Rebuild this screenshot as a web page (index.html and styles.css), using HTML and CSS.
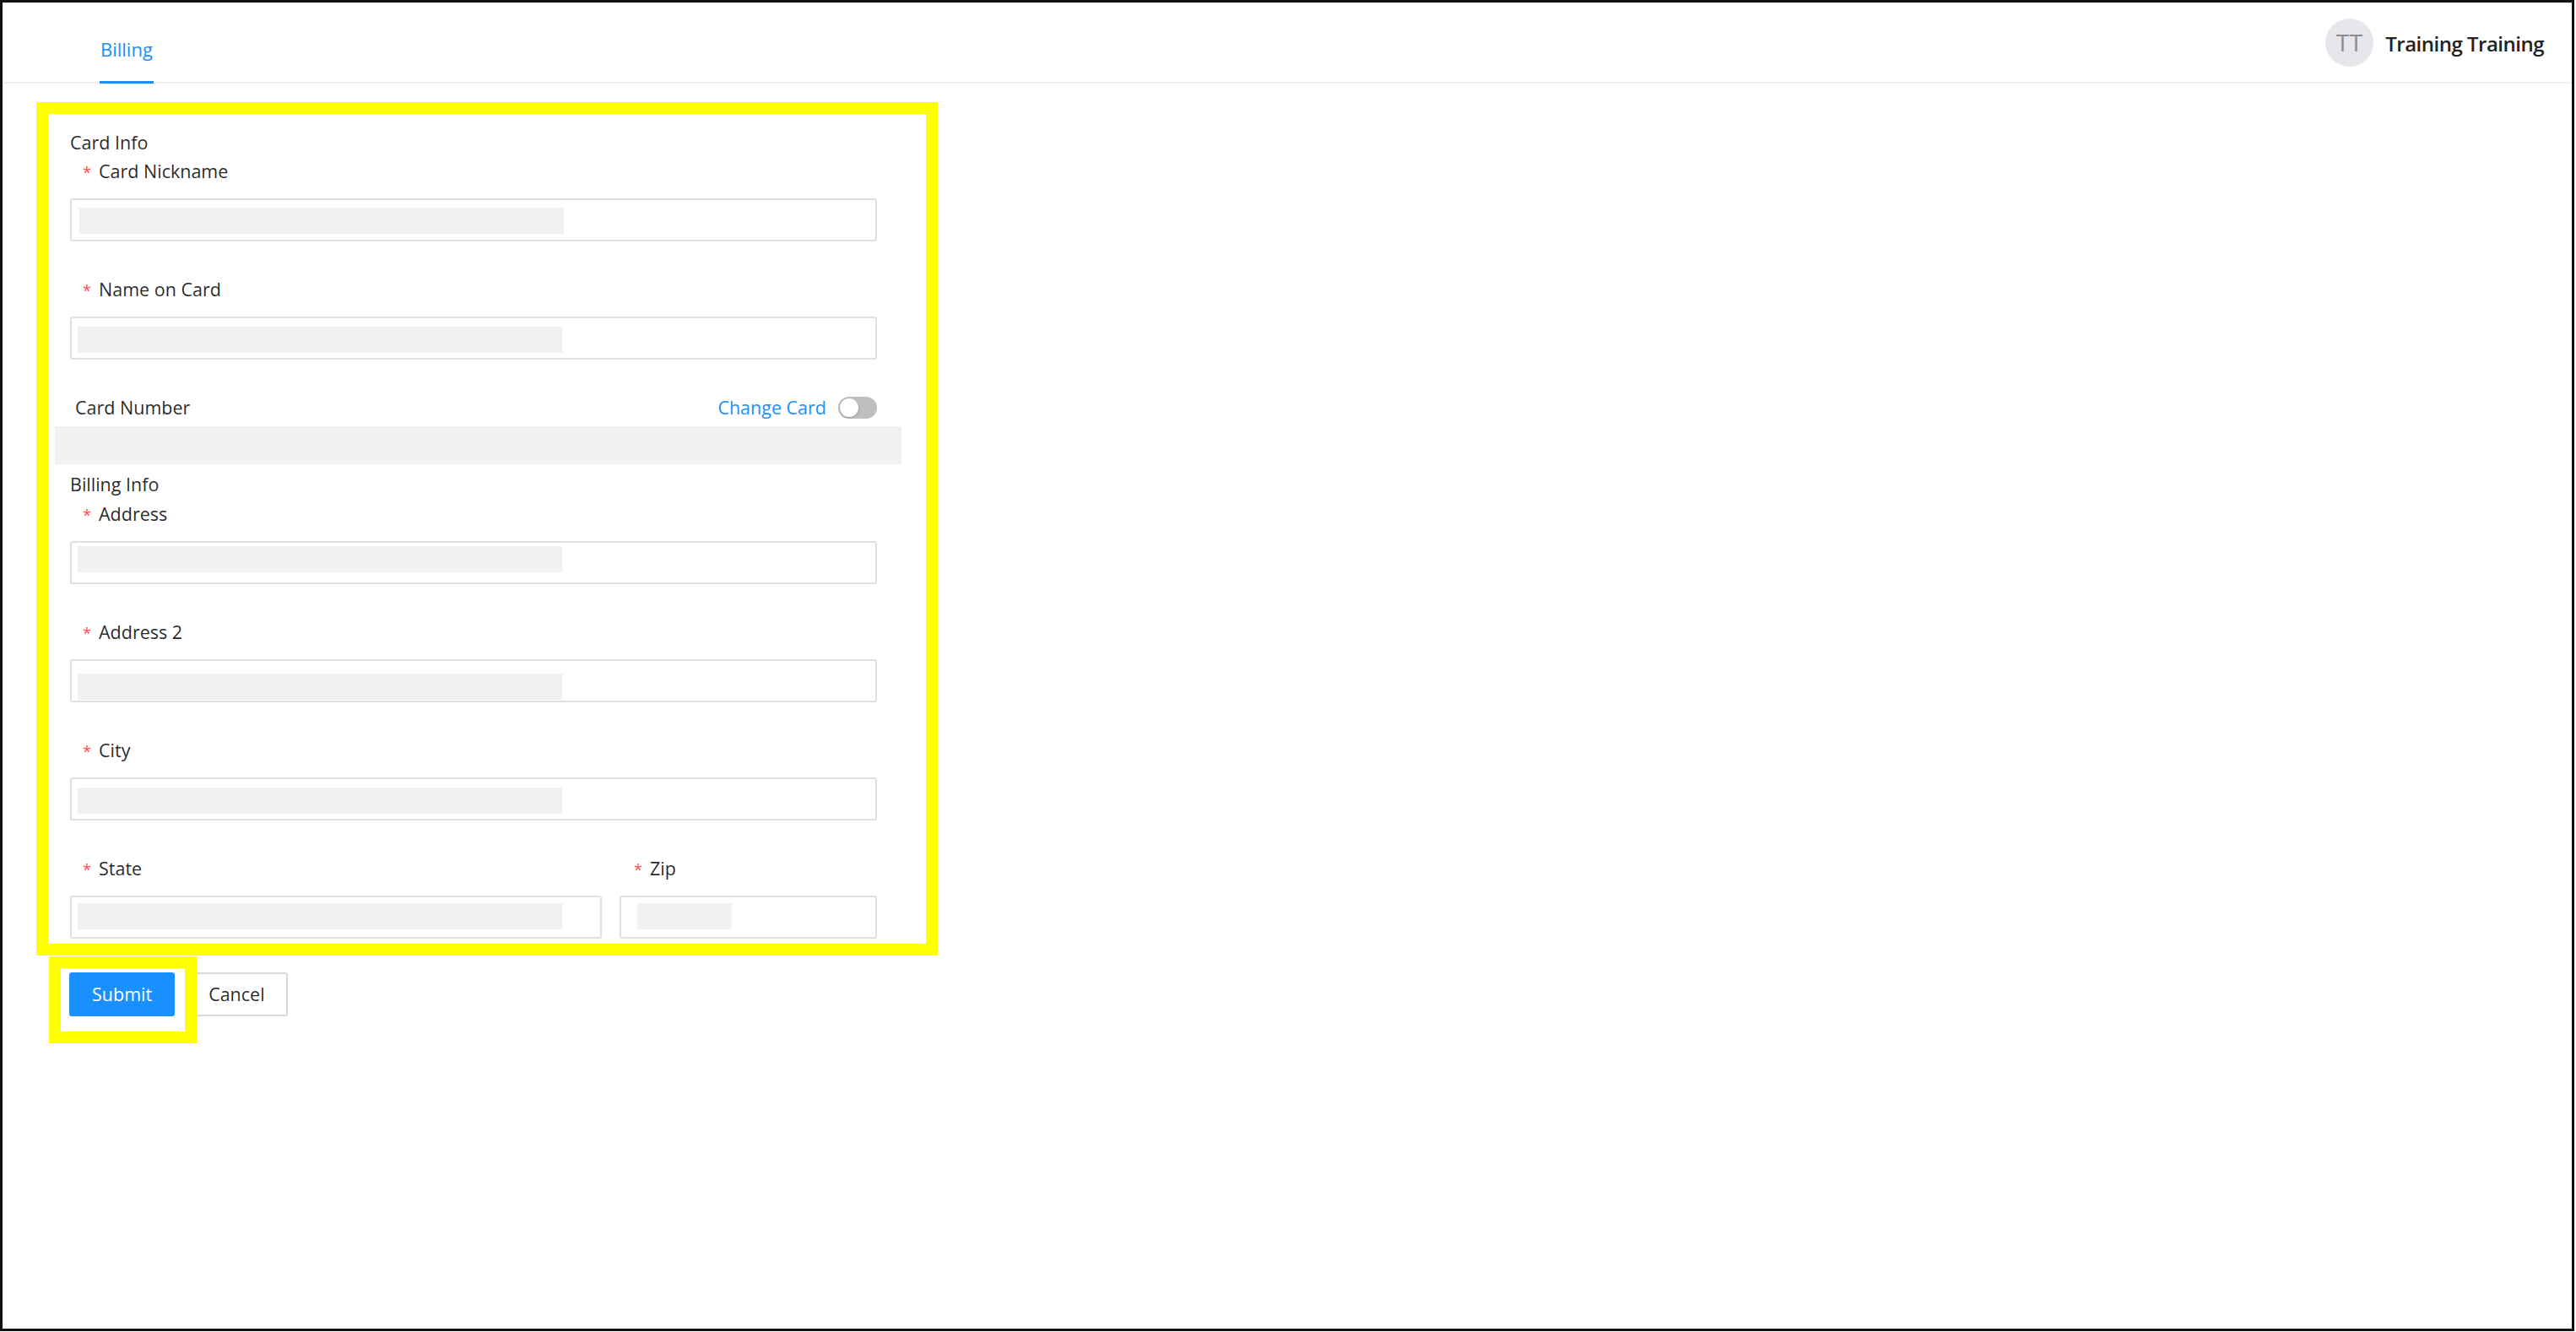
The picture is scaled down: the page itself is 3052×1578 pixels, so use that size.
FILE: index.html
```html
<!DOCTYPE html>
<html lang="en">
<head>
<meta charset="utf-8">
<title>Billing</title>
<link rel="stylesheet" href="styles.css">
</head>
<body>
<div class="frame">
  <header class="topbar">
    <nav class="tabs"><a class="tab tab-active">Billing</a></nav>
    <div class="user">
      <span class="avatar">TT</span>
      <span class="user-name">Training Training</span>
    </div>
  </header>
  <main class="content">
    <form class="billing-form">
      <div class="section-title">Card Info</div>
      <div class="field">
        <label class="field-label"><span class="req">*</span>Card Nickname</label>
        <div class="input"><span class="redact redact-nickname"></span></div>
      </div>
      <div class="field">
        <label class="field-label"><span class="req">*</span>Name on Card</label>
        <div class="input"><span class="redact redact-name"></span></div>
      </div>
      <div class="card-number-row">
        <span class="card-number-label">Card Number</span>
        <span class="change-card">Change Card<span class="switch"><span class="knob"></span></span></span>
      </div>
      <div class="masked-band"></div>
      <div class="section-title billing-title">Billing Info</div>
      <div class="field">
        <label class="field-label"><span class="req">*</span>Address</label>
        <div class="input"><span class="redact redact-address"></span></div>
      </div>
      <div class="field">
        <label class="field-label"><span class="req">*</span>Address 2</label>
        <div class="input"><span class="redact redact-address2"></span></div>
      </div>
      <div class="field">
        <label class="field-label"><span class="req">*</span>City</label>
        <div class="input"><span class="redact redact-city"></span></div>
      </div>
      <div class="field-row">
        <div class="field">
          <label class="field-label"><span class="req">*</span>State</label>
          <div class="input"><span class="redact redact-state"></span></div>
        </div>
        <div class="field">
          <label class="field-label field-label-zip"><span class="req">*</span>Zip</label>
          <div class="input"><span class="redact redact-zip"></span></div>
        </div>
      </div>
      <div class="actions">
        <button type="button" class="btn btn-primary">Submit</button>
        <button type="button" class="btn">Cancel</button>
      </div>
    </form>
  </main>
</div>
<div class="highlight highlight-form"></div>
<div class="highlight highlight-submit"></div>
</body>
</html>
```

FILE: styles.css
```css
* { box-sizing: border-box; }

html, body {
  margin: 0;
  padding: 0;
  background: #ffffff;
}

body {
  font-family: "Open Sans", "Noto Sans", sans-serif;
  font-size: 21.5px;
  line-height: 32px;
  color: rgba(0, 0, 0, 0.85);
}

.frame {
  width: 3050px;
  height: 1577px;
  border: 3px solid #111111;
  overflow: hidden;
  background: #ffffff;
}

/* header */
.topbar {
  height: 96px;
  border-bottom: 2px solid #f0f0f0;
  display: flex;
  justify-content: space-between;
  align-items: center;
  padding: 0 33px 0 115px;
}

.tabs {
  align-self: flex-start;
  display: flex;
}

.tab {
  display: block;
  height: 96px;
  padding: 39px 1px 0 1px;
  border-bottom: 3px solid transparent;
  font-size: 22px;
  line-height: 32px;
  color: rgba(0, 0, 0, 0.85);
  text-decoration: none;
}

.tab-active {
  color: #1890ff;
  border-bottom-color: #1890ff;
}

.user {
  display: flex;
  align-items: center;
  gap: 14px;
}

.avatar {
  width: 57px;
  height: 57px;
  border-radius: 50%;
  background: #e6e7ea;
  color: #8c8c8c;
  font-size: 28px;
  line-height: 57px;
  text-align: center;
  letter-spacing: 0.5px;
}

.user-name {
  font-size: 24px;
  font-weight: 600;
  letter-spacing: -0.5px;
  color: #222222;
  padding-top: 3px;
}

/* content */
.content {
  padding: 54px 0 0 80px;
}

.billing-form {
  width: 956px;
}

.section-title {
  height: 32px;
  margin-bottom: 2px;
}

.billing-title {
  margin-top: 8px;
  margin-bottom: 3px;
}

.field {
  margin-bottom: 41px;
}

.field-label {
  display: block;
  height: 32px;
  padding-left: 15px;
  margin-bottom: 16px;
}

.field-label-zip {
  padding-left: 17px;
}

.req {
  display: inline-block;
  width: 19px;
  color: #ff4d4f;
  font-size: 18px;
}

.input {
  height: 51px;
  border: 2px solid #e0e0e0;
  border-radius: 3px;
  background: #ffffff;
  padding: 0;
  overflow: hidden;
}

.redact {
  display: block;
  width: 574px;
  height: 31px;
  background: #f0f1f3;
  margin: 9px 0 0 7px;
}

.redact-nickname { margin-left: 9px; }
.redact-name { margin-top: 10px; }
.redact-address { margin-top: 4px; }
.redact-address2 { margin-top: 15px; }
.redact-city { margin-top: 10px; }
.redact-state { margin-top: 7px; }
.redact-zip { width: 112px; margin: 7px 0 0 19px; }

/* card number */
.card-number-row {
  display: flex;
  justify-content: space-between;
  align-items: center;
  height: 32px;
  margin-top: 2px;
  padding-left: 6px;
}

.change-card {
  display: flex;
  align-items: center;
  gap: 14px;
  color: #1890ff;
}

.switch {
  width: 46px;
  height: 26px;
  border-radius: 13px;
  background: #bfbfbf;
  padding: 2px;
  display: flex;
  align-items: center;
}

.knob {
  width: 22px;
  height: 22px;
  border-radius: 50%;
  background: #ffffff;
  box-shadow: 0 1px 3px rgba(0, 35, 11, 0.25);
}

.masked-band {
  height: 45px;
  margin: 6px -29px 0 -18px;
  background: #f0f1f3;
}

/* state / zip */
.field-row {
  display: grid;
  grid-template-columns: 630px 1fr;
  column-gap: 21px;
}

.field-row .field {
  margin-bottom: 0;
}

/* buttons */
.actions {
  display: flex;
  gap: 13px;
  margin-top: 40px;
  margin-left: -1px;
}

.btn {
  height: 52px;
  padding: 0 25px;
  border: 2px solid #d9d9d9;
  border-radius: 3px;
  background: #ffffff;
  color: rgba(0, 0, 0, 0.85);
  font-family: inherit;
  font-size: 21.5px;
  line-height: 32px;
  box-shadow: 0 2px 0 rgba(0, 0, 0, 0.015);
}

.btn-primary {
  background: #1890ff;
  border-color: #1890ff;
  color: #ffffff;
}

/* annotation highlights drawn over the page */
.highlight {
  position: absolute;
  border: 14px solid #ffff00;
  pointer-events: none;
}

.highlight-form {
  left: 43px;
  top: 121px;
  width: 1068px;
  height: 1011px;
}

.highlight-submit {
  left: 58px;
  top: 1133px;
  width: 175px;
  height: 103px;
}
```
